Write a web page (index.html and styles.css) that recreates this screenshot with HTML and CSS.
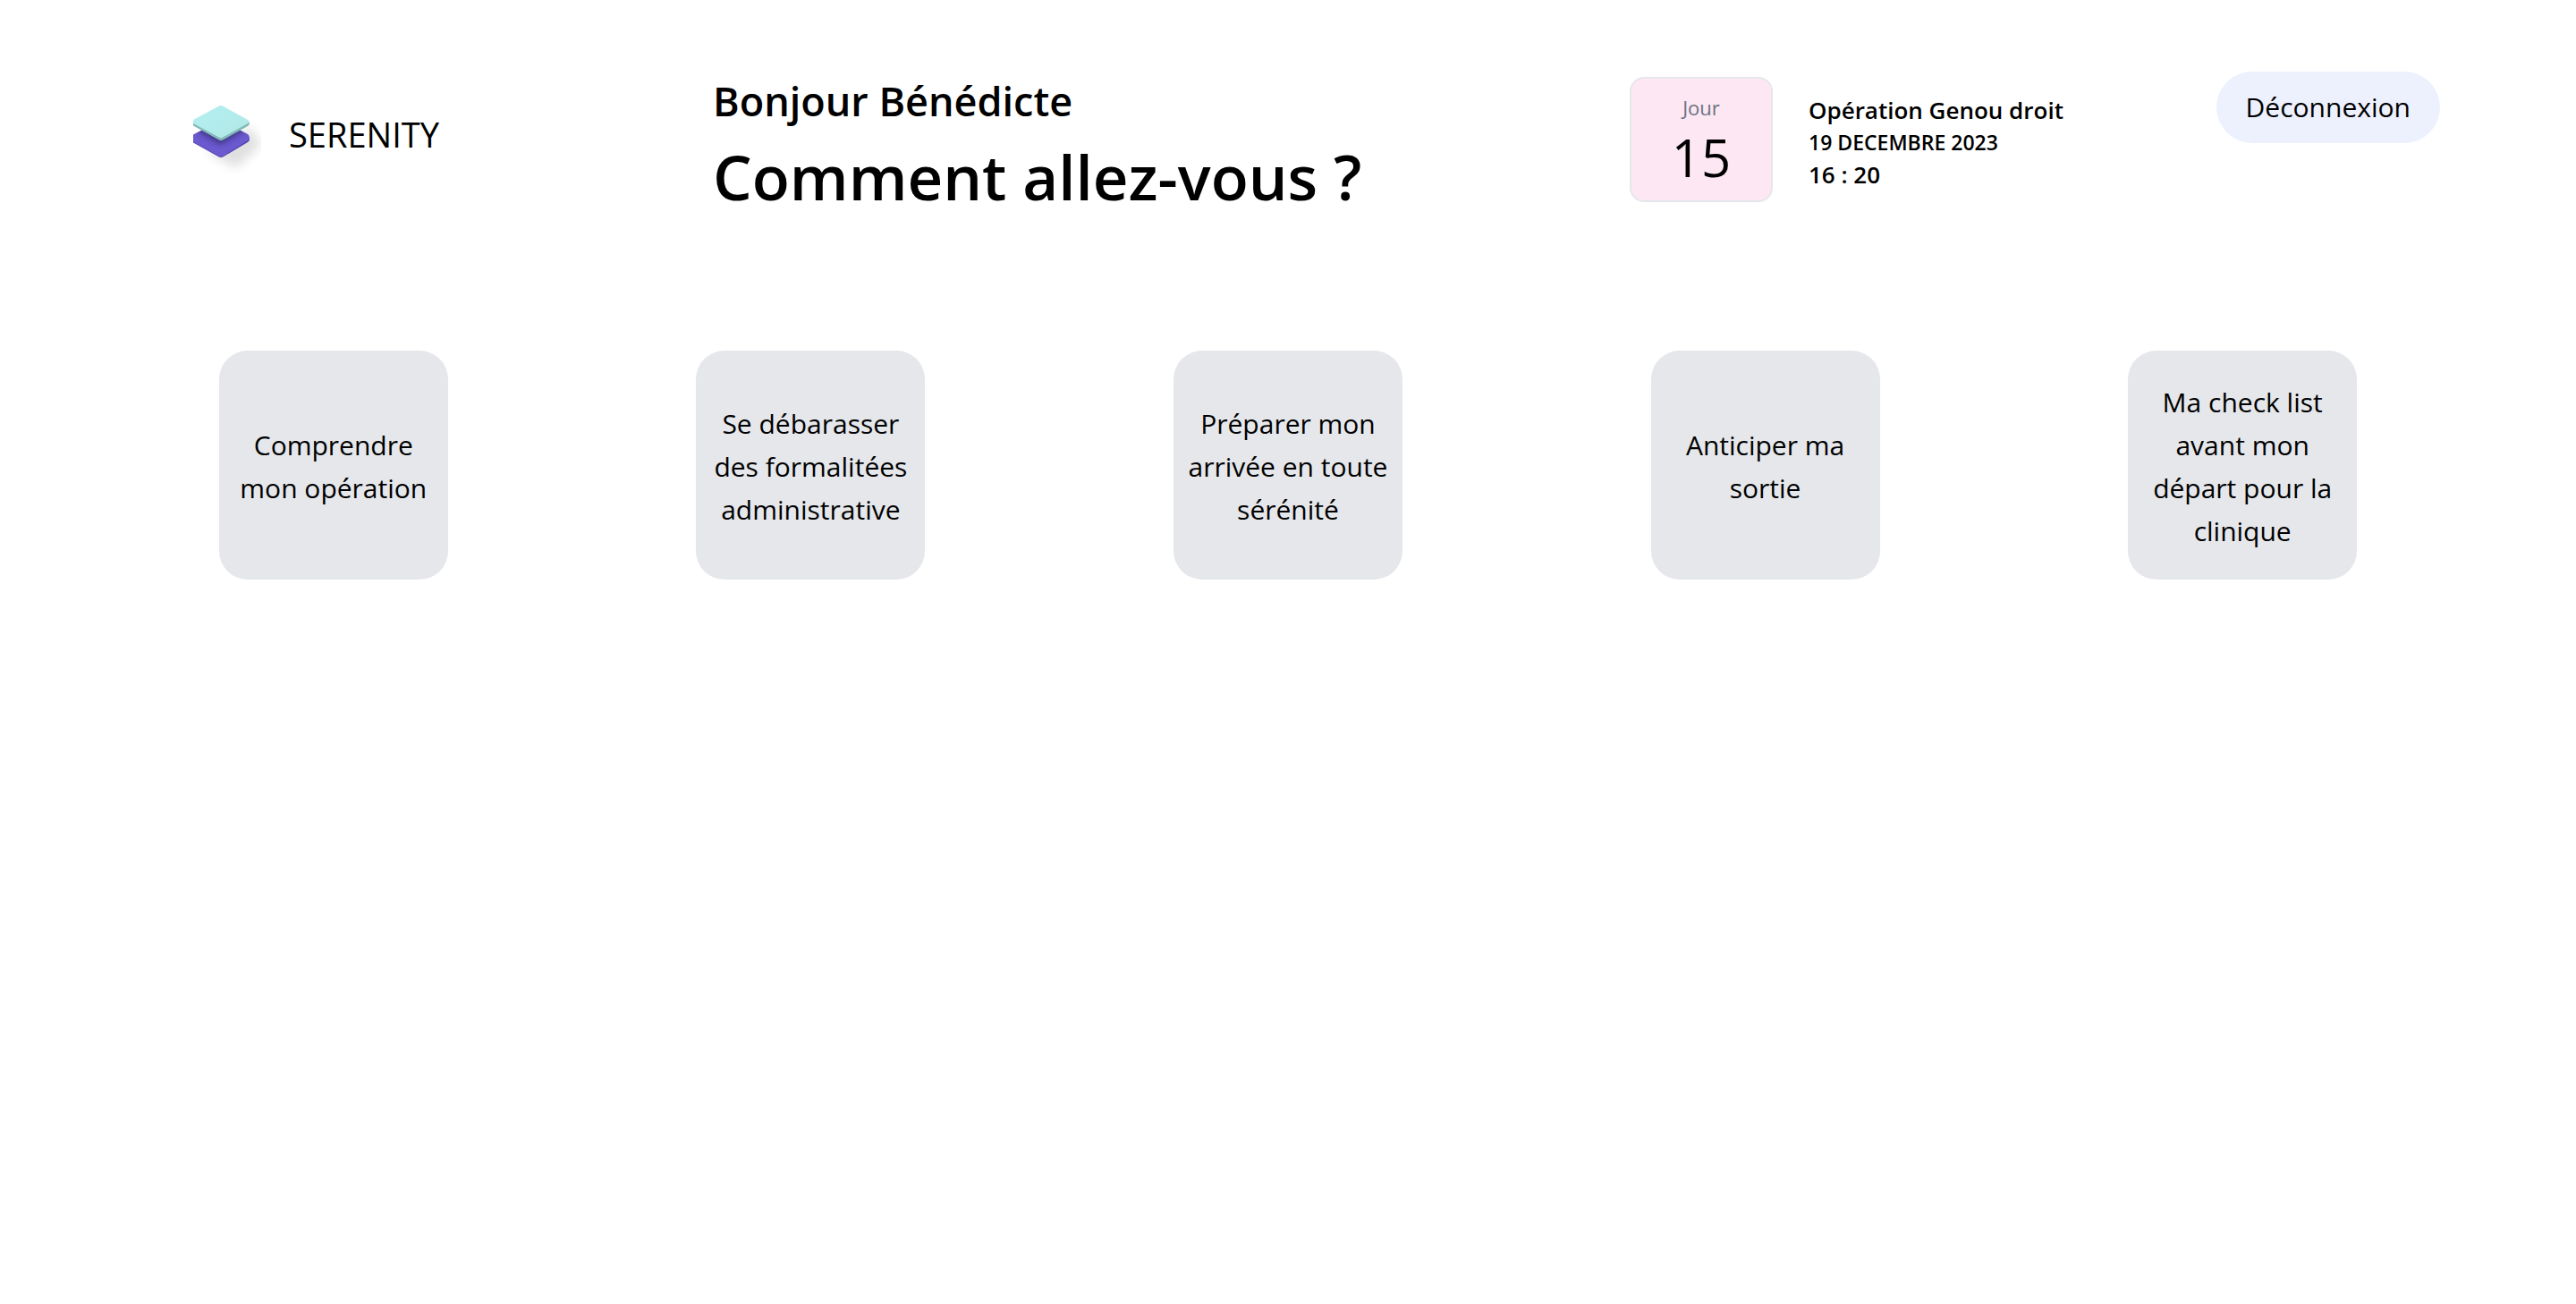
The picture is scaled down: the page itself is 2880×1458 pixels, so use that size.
FILE: index.html
```html
<!DOCTYPE html>
<html lang="fr">
<head>
  <meta charset="utf-8">
  <meta name="viewport" content="width=device-width, initial-scale=1">
  <title>Serenity</title>
  <link rel="stylesheet" href="styles.css">
</head>
<body>
  <header class="header">
    <div class="brand">
      <svg class="brand-logo" viewBox="0 0 76 76" aria-hidden="true">
        <defs>
          <linearGradient id="top" x1="0" y1="0" x2="1" y2="1">
            <stop offset="0" stop-color="#b4eff0"/>
            <stop offset="1" stop-color="#b0e8e6"/>
          </linearGradient>
          <filter id="soft" x="-50%" y="-50%" width="200%" height="200%">
            <feGaussianBlur stdDeviation="6"/>
          </filter>
          <filter id="shade" x="-50%" y="-50%" width="200%" height="200%">
            <feGaussianBlur stdDeviation="3"/>
          </filter>
          <clipPath id="base">
            <path d="M-1 33 28 18Q31 16 34 18L61 32Q65 36 61 39L34 56Q31 58 28 56L-1 40Z"/>
          </clipPath>
        </defs>
        <path d="M14 52 64 24 76 44 48 70Z" fill="#000" opacity=".12" filter="url(#soft)"/>
        <path d="M-1 38 61 35Q65 38 61 41L34 57Q31 59 28 57L-1 41Z" fill="#5646b0"/>
        <g clip-path="url(#base)">
          <path d="M-1 16H70V60H-1Z" fill="#6b59cf"/>
          <path d="M4 20 31 36 58 20 56 28 33 42Q31 43 28 42L5 28Z" fill="#2b2660" opacity=".75" filter="url(#shade)"/>
        </g>
        <path d="M-1 20 61 17Q65 20 61 23L34 38Q31 40 28 38L-1 22Z" fill="#84bab8"/>
        <path d="M0 16 28 1Q31-1 34 1L61 16Q64 18 61 20L34 35Q31 37 28 35L0 20Z" fill="url(#top)"/>
      </svg>
      <span class="brand-name">SERENITY</span>
    </div>
    <div class="greeting">
      <p class="hello">Bonjour Bénédicte</p>
      <h1 class="question">Comment allez-vous ?</h1>
    </div>
    <section class="operation">
      <div class="day">
        <span class="day-label">Jour</span>
        <span class="day-number">15</span>
      </div>
      <div class="details">
        <p class="details-name">Opération Genou droit</p>
        <p class="details-date">19 DECEMBRE 2023</p>
        <p class="details-time">16 : 20</p>
      </div>
    </section>
    <button class="logout" type="button">Déconnexion</button>
  </header>
  <main class="cards">
    <a class="card" href="#operation">Comprendre mon opération</a>
    <a class="card" href="#formalites">Se débarasser des formalitées administrative</a>
    <a class="card" href="#arrivee">Préparer mon arrivée en toute sérénité</a>
    <a class="card" href="#sortie">Anticiper ma sortie</a>
    <a class="card" href="#checklist">Ma check list avant mon départ pour la clinique</a>
  </main>
</body>
</html>
```
FILE: styles.css
```css
* {
  box-sizing: border-box;
}

body {
  margin: 0;
  background: #fff;
  color: #000;
  font-family: "Segoe UI", "Open Sans", "Noto Sans", sans-serif;
}

p,
h1 {
  margin: 0;
}

.header {
  display: grid;
  grid-template-columns: 581px 1025px auto auto;
  align-items: start;
  padding: 80px 152px 0 216px;
}

.brand {
  display: flex;
  align-items: flex-start;
  gap: 31px;
  padding-top: 38px;
}

.brand-logo {
  width: 76px;
  height: 76px;
  overflow: hidden;
}

.brand-name {
  font-size: 38px;
  line-height: 64px;
}

.greeting {
  font-weight: 600;
}

.hello {
  font-size: 45px;
  line-height: 66px;
}

.question {
  font-size: 69px;
  line-height: 102px;
  font-weight: 600;
}

.operation {
  display: flex;
  align-items: flex-start;
  gap: 40px;
  padding-top: 6px;
}

.day {
  display: flex;
  flex-direction: column;
  align-items: center;
  gap: 4px;
  width: 160px;
  padding: 16px 16px 12px;
  border: 2px solid #e5e7eb;
  border-radius: 16px;
  background: #fce7f3;
}

.day-label {
  color: #6b7280;
  font-size: 22px;
  line-height: 32px;
}

.day-number {
  font-size: 58px;
  line-height: 72px;
}

.details {
  padding-top: 17px;
  font-weight: 600;
}

.details-name,
.details-time {
  font-size: 26px;
  line-height: 40px;
}

.details-date {
  font-size: 23px;
  line-height: 32px;
}

.logout {
  justify-self: end;
  padding: 16px 33px;
  border: 0;
  border-radius: 40px;
  background: #edf1fe;
  color: inherit;
  font: inherit;
  font-size: 30px;
  line-height: 48px;
}

.cards {
  display: flex;
  justify-content: space-around;
  padding: 144px 106px 0;
}

.card {
  display: flex;
  align-items: center;
  justify-content: center;
  width: 256px;
  min-height: 256px;
  padding: 18px 16px 14px;
  border-radius: 32px;
  background: #e5e7eb;
  color: inherit;
  font-size: 30px;
  line-height: 48px;
  text-align: center;
  text-decoration: none;
}
```
